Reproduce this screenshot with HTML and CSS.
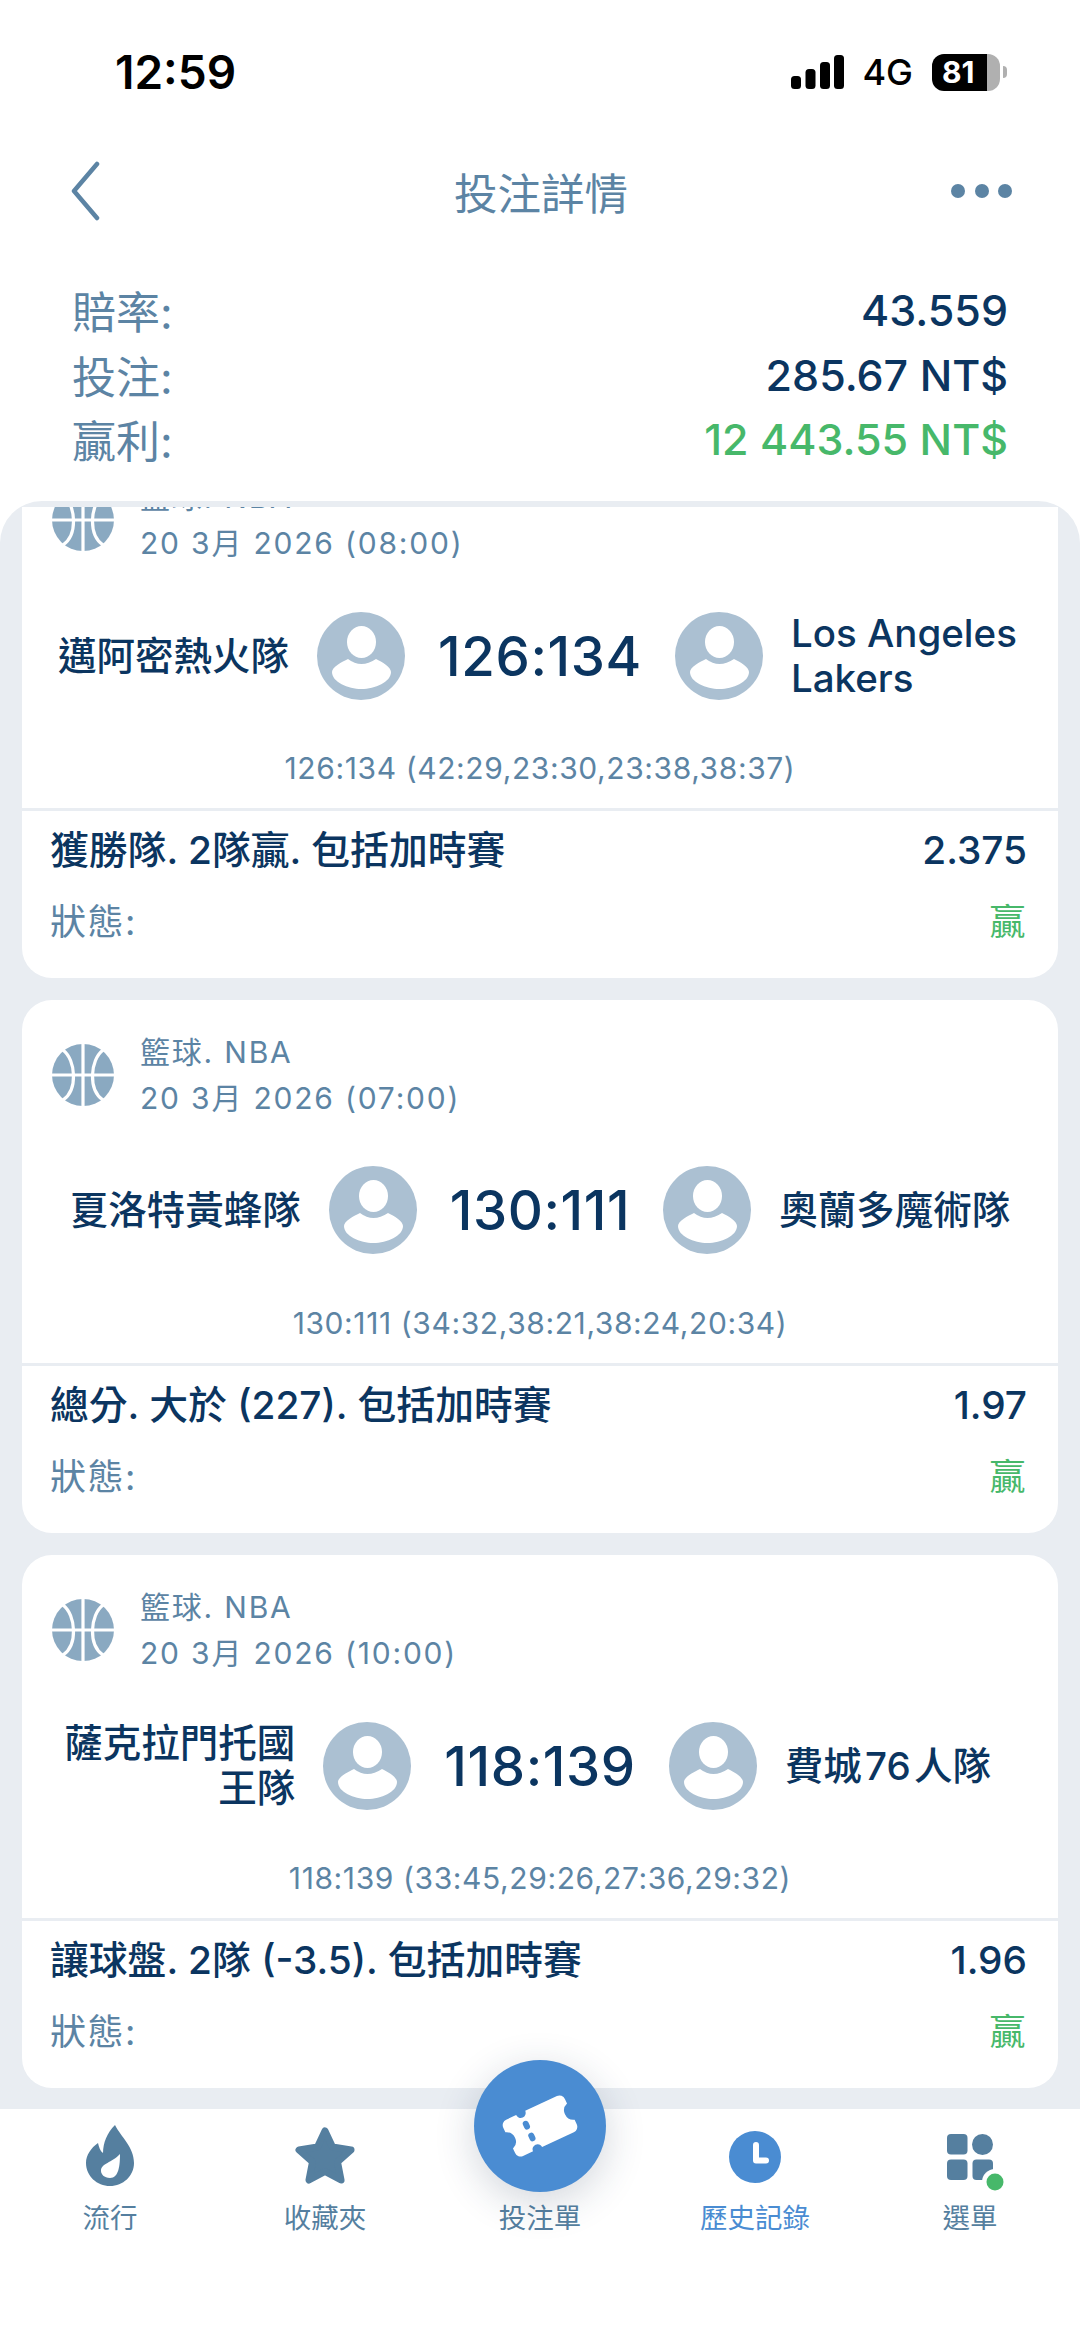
FILE: index.html
```html
<!DOCTYPE html>
<html>
<head>
    <title>投注詳情</title>
    <link rel="stylesheet" href="styles.css">
</head>
<body>
    <svg class="defs" width="0" height="0">
        <symbol id="ball" viewBox="0 0 62 62">
            <circle cx="31" cy="31" r="31" fill="#8aa9c1"/>
            <path d="M31 0V62M0 31H62M11 6C24 16 26 46 11 56M51 6C38 16 36 46 51 56" fill="none" stroke="#fff" stroke-width="3.2"/>
        </symbol>
        <symbol id="avatar" viewBox="0 0 88 88">
            <circle cx="44" cy="44" r="44" fill="#abc0d2"/>
            <ellipse cx="44.5" cy="30" rx="14.5" ry="16" fill="#fff"/>
            <path d="M31 47Q44 57 59 47C65 50 74 55 74 60C74 70 58 77 44.5 77C31 77 15 70 15 60C15 55 25 50 31 47Z" fill="#fff"/>
        </symbol>
    </svg>

    <div class="status-bar">
        <span class="time">12:59</span>
        <div class="status-right">
            <svg class="signal" width="53" height="34" viewBox="0 0 53 34">
                <rect x="0" y="21" width="10" height="13" rx="3.5"/>
                <rect x="14.5" y="14" width="10" height="20" rx="3.5"/>
                <rect x="29" y="7" width="10" height="27" rx="3.5"/>
                <rect x="43" y="0" width="10" height="34" rx="3.5"/>
            </svg>
            <span class="network">4G</span>
            <div class="battery"><span class="battery-level">81</span></div>
            <span class="battery-nub"></span>
        </div>
    </div>

    <div class="top-bar">
        <div class="top-side">
            <svg class="back" width="30" height="60" viewBox="0 0 30 60">
                <path d="M27 3L4 30L27 57" fill="none" stroke="#5c84a4" stroke-width="4.5" stroke-linecap="round" stroke-linejoin="round"/>
            </svg>
        </div>
        <h1>投注詳情</h1>
        <div class="top-side dots"><i></i><i></i><i></i></div>
    </div>

    <div class="summary">
        <div class="summary-row"><span>賠率:</span><b>43.559</b></div>
        <div class="summary-row"><span>投注:</span><b>285.67 NT$</b></div>
        <div class="summary-row"><span>贏利:</span><b class="win">12 443.55 NT$</b></div>
    </div>

    <div class="panel">
        <div class="scroll">
            <div class="card first">
                <div class="league">
                    <svg class="ball"><use href="#ball"/></svg>
                    <div class="league-text">
                        <div>籃球. NBA</div>
                        <div>20 3月 2026 (08:00)</div>
                    </div>
                </div>
                <div class="teams">
                    <div class="team home">
                        <span class="team-name">邁阿密熱火隊</span>
                        <svg class="avatar"><use href="#avatar"/></svg>
                    </div>
                    <div class="score">126:134</div>
                    <div class="team">
                        <svg class="avatar"><use href="#avatar"/></svg>
                        <span class="team-name">Los Angeles Lakers</span>
                    </div>
                </div>
                <div class="periods">126:134 (42:29,23:30,23:38,38:37)</div>
                <div class="bet">
                    <div class="bet-row"><span class="market">獲勝隊. 2隊贏. 包括加時賽</span><span class="market">2.375</span></div>
                    <div class="bet-row"><span class="state">狀態:</span><span class="state win">贏</span></div>
                </div>
            </div>

            <div class="card">
                <div class="league">
                    <svg class="ball"><use href="#ball"/></svg>
                    <div class="league-text">
                        <div>籃球. NBA</div>
                        <div>20 3月 2026 (07:00)</div>
                    </div>
                </div>
                <div class="teams">
                    <div class="team home">
                        <span class="team-name">夏洛特黃蜂隊</span>
                        <svg class="avatar"><use href="#avatar"/></svg>
                    </div>
                    <div class="score">130:111</div>
                    <div class="team">
                        <svg class="avatar"><use href="#avatar"/></svg>
                        <span class="team-name">奧蘭多魔術隊</span>
                    </div>
                </div>
                <div class="periods">130:111 (34:32,38:21,38:24,20:34)</div>
                <div class="bet">
                    <div class="bet-row"><span class="market">總分. 大於 (227). 包括加時賽</span><span class="market">1.97</span></div>
                    <div class="bet-row"><span class="state">狀態:</span><span class="state win">贏</span></div>
                </div>
            </div>

            <div class="card">
                <div class="league">
                    <svg class="ball"><use href="#ball"/></svg>
                    <div class="league-text">
                        <div>籃球. NBA</div>
                        <div>20 3月 2026 (10:00)</div>
                    </div>
                </div>
                <div class="teams">
                    <div class="team home">
                        <span class="team-name">薩克拉門托國王隊</span>
                        <svg class="avatar"><use href="#avatar"/></svg>
                    </div>
                    <div class="score">118:139</div>
                    <div class="team">
                        <svg class="avatar"><use href="#avatar"/></svg>
                        <span class="team-name">費城&#8202;76&#8202;人隊</span>
                    </div>
                </div>
                <div class="periods">118:139 (33:45,29:26,27:36,29:32)</div>
                <div class="bet">
                    <div class="bet-row"><span class="market">讓球盤. 2隊 (-3.5). 包括加時賽</span><span class="market">1.96</span></div>
                    <div class="bet-row"><span class="state">狀態:</span><span class="state win">贏</span></div>
                </div>
            </div>
        </div>
    </div>

    <nav class="tabbar">
        <div class="tab">
            <div class="tab-icon">
                <svg width="48" height="61" viewBox="0 0 48 61">
                    <path d="M29 0C35 12 48 22 48 38C48 51 37 61 24 61C11 61 0 51 0 38C0 30 5 23 12 18C13 22 14 26 17 28C17 18 21 8 29 0Z" fill="#557f9f"/>
                    <path d="M34 29C34 40 33 53 24 53C18 53 15 49 15 46C15 38 26 38 34 29Z" fill="#fff"/>
                </svg>
            </div>
            <span>流行</span>
        </div>
        <div class="tab">
            <div class="tab-icon">
                <svg width="60" height="57" viewBox="0 0 60 57">
                    <path d="M30 4L37.500 20L56 23L42.500 35L46 53L30 44.500L14 53L17.500 35L4 23L22.500 20Z" fill="#557f9f" stroke="#557f9f" stroke-width="7" stroke-linejoin="round"/>
                </svg>
            </div>
            <span>收藏夾</span>
        </div>
        <div class="tab">
            <div class="tab-icon"></div>
            <span>投注單</span>
        </div>
        <div class="tab active">
            <div class="tab-icon low">
                <svg width="52" height="52" viewBox="0 0 52 52">
                    <circle cx="26" cy="26" r="26" fill="#4a8cd2"/>
                    <path d="M27 14V29.500H37" fill="none" stroke="#fff" stroke-width="6" stroke-linecap="round" stroke-linejoin="round"/>
                </svg>
            </div>
            <span>歷史記錄</span>
        </div>
        <div class="tab">
            <div class="tab-icon low">
                <svg class="grid-icon" width="46" height="46" viewBox="0 0 46 46">
                    <rect width="20.500" height="20.500" rx="4" fill="#557f9f"/>
                    <circle cx="35.500" cy="10.500" r="10.500" fill="#557f9f"/>
                    <rect y="25.500" width="20.500" height="20.500" rx="4" fill="#557f9f"/>
                    <rect x="25.500" y="25.500" width="20.500" height="20.500" rx="4" fill="#557f9f"/>
                    <circle cx="48" cy="48" r="13" fill="#fff"/>
                    <circle cx="48" cy="48" r="8.500" fill="#47b86a"/>
                </svg>
            </div>
            <span>選單</span>
        </div>
        <div class="fab">
            <svg width="80" height="70" viewBox="0 0 80 70">
                <g transform="rotate(-25 40 35)">
                    <path d="M12 15H23a5 5 0 0 0 10 0H68a6 6 0 0 1 6 6V26a9.500 9.500 0 0 0 0 18V49a6 6 0 0 1-6 6H33a5 5 0 0 0-10 0H12a6 6 0 0 1-6-6V44a9.500 9.500 0 0 0 0-18V21a6 6 0 0 1 6-6Z" fill="#fff"/>
                    <rect x="25" y="24" width="6" height="9" rx="3" fill="#4a8cd2"/>
                    <rect x="25" y="37" width="6" height="9" rx="3" fill="#4a8cd2"/>
                </g>
            </svg>
        </div>
    </nav>
</body>
</html>
```

FILE: styles.css
```css
* {
    box-sizing: border-box;
}

body {
    font-family: Inter, "Noto Sans CJK TC", sans-serif;
    margin: 0;
    width: 1080px;
    height: 2337px;
    display: flex;
    flex-direction: column;
    background-color: #fff;
    color: #5c84a4;
    overflow: hidden;
}

.defs {
    position: absolute;
}

.status-bar {
    height: 120px;
    padding: 50px 73px 0 115px;
    display: flex;
    justify-content: space-between;
    align-items: flex-start;
    color: #000;
}

.time {
    font-size: 46px;
    font-weight: 600;
    line-height: 44px;
}

.status-right {
    display: flex;
    align-items: center;
    height: 44px;
}

.signal {
    margin-right: 18px;
}

.network {
    font-size: 36px;
    font-weight: 500;
    margin-right: 19px;
}

.battery {
    width: 68px;
    height: 37px;
    border-radius: 12px;
    background: linear-gradient(to right, #000 55px, #b0b0b0 55px);
    color: #fff;
    font-size: 30px;
    font-weight: 700;
    line-height: 37px;
    padding-left: 10px;
}

.battery-nub {
    width: 4px;
    height: 12px;
    margin-left: 3px;
    background-color: #b0b0b0;
    border-radius: 0 4px 4px 0;
}

.top-bar {
    height: 144px;
    padding: 0 68px 2px 70px;
    display: flex;
    align-items: center;
}

.top-side {
    flex: 1;
    display: flex;
}

.top-bar h1 {
    margin: 0;
    font-size: 43.5px;
    font-weight: 400;
}

.dots {
    justify-content: flex-end;
    gap: 9.5px;
}

.dots i {
    width: 14px;
    height: 14px;
    border-radius: 50%;
    background-color: #5c84a4;
}

.summary {
    padding: 14px 72px 0;
    height: 237px;
}

.summary-row {
    display: flex;
    justify-content: space-between;
    align-items: center;
    height: 64.5px;
    font-size: 44px;
}

.summary-row b {
    font-size: 43px;
    font-weight: 500;
    color: #0b3560;
}

.summary-row b.win,
.win {
    color: #47b86a;
}

.panel {
    flex: 1;
    min-height: 0;
    background-color: #e9edf2;
    border-radius: 42px 42px 0 0;
    padding: 6px 22px 0;
}

.scroll {
    height: 100%;
    overflow: hidden;
    display: flex;
    flex-direction: column;
    gap: 22px;
}

.card {
    flex: none;
    height: 533px;
    background-color: #fff;
    border-radius: 30px;
    padding-top: 29px;
}

/* first card is scrolled under the summary */
.card.first {
    margin-top: -62px;
}

.league {
    display: flex;
    align-items: center;
    gap: 26px;
    padding-left: 30px;
}

.ball {
    width: 62px;
    height: 62px;
}

.league-text {
    font-size: 30px;
    letter-spacing: 1.8px;
    line-height: 46px;
}

.teams {
    display: grid;
    grid-template-columns: 1fr auto 1fr;
    column-gap: 33px;
    align-items: center;
    margin-top: 45px;
    padding: 0 30px;
    height: 88px;
}

.team {
    display: flex;
    align-items: center;
    gap: 28px;
    min-width: 0;
}

.avatar {
    flex: none;
    width: 88px;
    height: 88px;
}

.team-name {
    flex: 1;
    font-size: 38.5px;
    font-weight: 500;
    line-height: 45px;
    color: #0b3560;
}

.home .team-name {
    text-align: right;
}

.score {
    font-size: 54.5px;
    font-weight: 500;
    letter-spacing: 0.6px;
    color: #0b3560;
}

.periods {
    margin-top: 46px;
    font-size: 30px;
    letter-spacing: 0.6px;
    line-height: 46px;
    text-align: center;
}

.bet {
    margin-top: 17px;
    border-top: 3px solid #e9edf2;
    padding: 16px 31px 0 28px;
}

.bet-row {
    display: flex;
    justify-content: space-between;
    line-height: 46px;
    margin-bottom: 26px;
}

.market {
    font-size: 38.8px;
    font-weight: 500;
    color: #0b3560;
}

.state {
    font-size: 36px;
    letter-spacing: 1.5px;
}

.tabbar {
    position: relative;
    height: 228px;
    flex: none;
    display: grid;
    grid-template-columns: repeat(5, 215px);
    justify-content: center;
    background-color: #fff;
    padding-top: 10px;
}

.tab {
    display: flex;
    flex-direction: column;
    align-items: center;
    font-size: 27.5px;
    line-height: 38px;
    color: #557f9f;
}

.tab.active {
    color: #4a8cd2;
}

.tab-icon {
    height: 72px;
    margin-bottom: 8px;
    display: flex;
    align-items: center;
    justify-content: center;
}

.tab-icon.low svg {
    margin-top: 4px;
}

.grid-icon {
    overflow: visible;
}

.fab {
    position: absolute;
    left: 474px;
    top: -49px;
    width: 132px;
    height: 132px;
    border-radius: 50%;
    background-color: #4a8cd2;
    box-shadow: 0 10px 40px rgba(30, 50, 80, 0.2);
    display: flex;
    align-items: center;
    justify-content: center;
}
```
